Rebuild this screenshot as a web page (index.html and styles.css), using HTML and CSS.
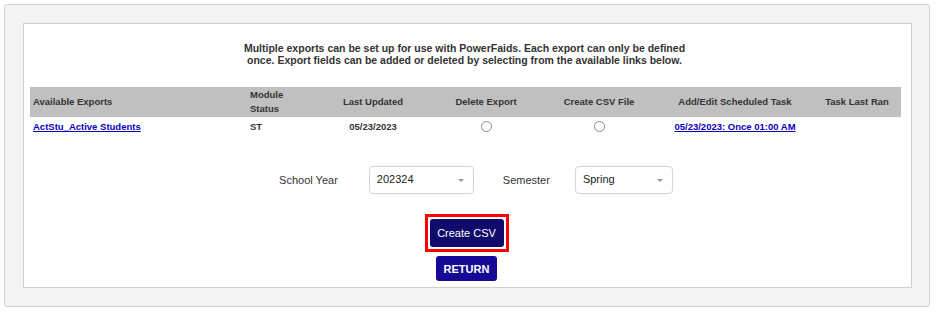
FILE: index.html
```html
<!DOCTYPE html>
<html lang="en">
<head>
  <meta charset="UTF-8" />
  <title>Export Setup</title>
  <link rel="stylesheet" href="styles.css">
</head>
<body>
  <div class="panel">
    <div class="inner">
      <p class="intro">Multiple exports can be set up for use with PowerFaids. Each export can only be defined<br/>once. Export fields can be added or deleted by selecting from the available links below.</p>

      <table class="exports">
        <colgroup>
          <col style="width:217px" />
          <col style="width:68px" />
          <col style="width:116px" />
          <col style="width:110px" />
          <col style="width:116px" />
          <col style="width:156px" />
          <col style="width:88px" />
        </colgroup>
        <thead>
          <tr>
            <th class="left">Available Exports</th>
            <th class="left">Module Status</th>
            <th>Last Updated</th>
            <th>Delete Export</th>
            <th>Create CSV File</th>
            <th>Add/Edit Scheduled Task</th>
            <th>Task Last Ran</th>
          </tr>
        </thead>
        <tbody>
          <tr>
            <td class="left"><a href="#">ActStu_Active Students</a></td>
            <td class="left">ST</td>
            <td>05/23/2023</td>
            <td><input type="radio" name="del" class="radio" /></td>
            <td><input type="radio" name="csv" class="radio" /></td>
            <td><a href="#">05/23/2023: Once 01:00 AM</a></td>
            <td></td>
          </tr>
        </tbody>
      </table>

      <div class="filters">
        <label class="flabel">School Year</label>
        <span class="selectwrap"><select class="fselect"><option>202324</option></select></span>
        <label class="flabel short">Semester</label>
        <span class="selectwrap"><select class="fselect narrow"><option>Spring</option></select></span>
      </div>

      <div class="actions">
        <span class="highlight"><button class="btn btn-create">Create CSV</button></span>
        <button class="btn btn-return">RETURN</button>
      </div>
    </div>
  </div>
</body>
</html>
```

FILE: styles.css
```css
body { margin: 0; padding: 4px; font-family: "Liberation Sans", Arial, sans-serif; color: #333; }
.panel { width: 888px; height: 265px; background: #f4f4f4; border: 1px solid #d0d0d0; border-radius: 3px; padding: 18px; }
.inner { width: 875px; height: 251px; background: #fff; border: 1px solid #cfcfcf; padding: 6px 6px; }

.intro { margin: 12px 0 0 -6px; text-align: center; font-size: 10.5px; font-weight: bold; line-height: 12px; color: #333; }

.exports { margin-top: 21px; width: 871px; border-collapse: collapse; table-layout: fixed; font-size: 9.5px; }
.exports th { background: #c0c0c0; height: 30px; padding: 0 3px; font-weight: bold; text-align: center; line-height: 14px; }
.exports td { height: 18px; padding: 0 3px; text-align: center; font-weight: bold; }
.exports .left { text-align: left; }
.exports a { color: #0c00b8; }

.radio { appearance: none; -webkit-appearance: none; width: 11px; height: 11px; margin: 0; border: 1px solid #8a8a8a; border-radius: 50%; background: #fff; vertical-align: -2px; }

.filters { display: flex; justify-content: center; align-items: center; margin-top: 31px; margin-left: 17px; }
.flabel { font-size: 11px; margin-right: 31px; }
.flabel.short { margin-right: 25px; }
.selectwrap { position: relative; display: inline-block; margin-right: 29px; }
.selectwrap:last-child { margin-right: 0; }
.selectwrap::after { content: ""; position: absolute; right: 10px; top: 13px; border-left: 3px solid transparent; border-right: 3px solid transparent; border-top: 3px solid #999; }
.fselect { appearance: none; -webkit-appearance: none; width: 105px; height: 28px; padding: 0 7px 3px; border: 1px solid #d4d4d4; border-radius: 4px; background: #fff; font-family: inherit; font-size: 11px; color: #222; }
.fselect.narrow { width: 98px; }

.actions { display: flex; flex-direction: column; align-items: center; margin-top: 20px; margin-left: -2px; }
.highlight { display: block; border: 3px solid #f00; padding: 2px; }
.btn { display: block; border: none; border-radius: 3px; color: #fff; font-family: inherit; font-size: 11px; cursor: pointer; }
.btn-create { width: 74px; height: 28px; background: #0f0a6b; }
.btn-return { width: 61px; height: 25px; margin-top: 4px; background: #140a96; font-weight: bold; }
```
